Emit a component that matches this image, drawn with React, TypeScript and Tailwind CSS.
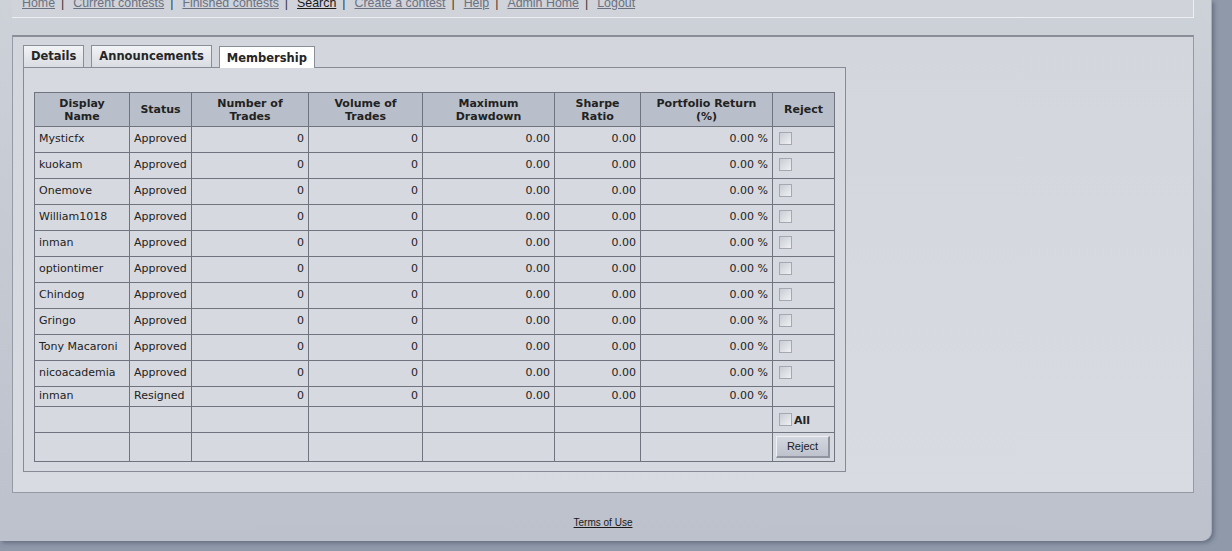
import React from "react";

type Member = { name: string; status: string; canReject: boolean };

const members: Member[] = [
  { name: "Mysticfx", status: "Approved", canReject: true },
  { name: "kuokam", status: "Approved", canReject: true },
  { name: "Onemove", status: "Approved", canReject: true },
  { name: "William1018", status: "Approved", canReject: true },
  { name: "inman", status: "Approved", canReject: true },
  { name: "optiontimer", status: "Approved", canReject: true },
  { name: "Chindog", status: "Approved", canReject: true },
  { name: "Gringo", status: "Approved", canReject: true },
  { name: "Tony Macaroni", status: "Approved", canReject: true },
  { name: "nicoacademia", status: "Approved", canReject: true },
  { name: "inman", status: "Resigned", canReject: false },
];

const navLinks = [
  "Home",
  "Current contests",
  "Finished contests",
  "Search",
  "Create a contest",
  "Help",
  "Admin Home",
  "Logout",
];

function Box() {
  return (
    <span className="inline-block h-[13px] w-[13px] border border-[#a3a8b2] bg-gradient-to-br from-[#c9ccd3] to-[#eef0f3] align-middle" />
  );
}

const cell = "border border-[#6f747f] px-[4px] text-[11px] text-[#222]";

export default function App() {
  return (
    <div className="h-[551px] w-[1232px] overflow-hidden bg-[#8f99aa]">
      <div className="flex h-[541px] w-[1212px] flex-col rounded-br-[10px] border-r border-[#a9afba] bg-gradient-to-b from-[#cdd1d8] to-[#bcc1cc] pl-[12px] pr-[17px] shadow-[2px_2px_4px_rgba(60,70,90,0.5)]">
        {/* top nav */}
        <div
          className="-mt-[12px] h-[30px] border-b border-r border-[#eceef2] bg-[#d0d3da] pl-[10px] pt-[8px] text-[12.4px] leading-[14px] text-[#6b7180]"
          style={{ fontFamily: '"Liberation Sans", Arial, sans-serif' }}
        >
          {navLinks.map((l, i) => (
            <span key={l}>
              <a className={l === "Search" ? "text-[#1a1a1a] underline" : "underline"}>{l}</a>
              {i < navLinks.length - 1 && (
                <span className="ml-[6px] mr-[9px] text-[#333]">|</span>
              )}
            </span>
          ))}
        </div>

        {/* main box */}
        <div
          className="mt-[17px] h-[458px] border border-t-2 border-[#959aa4] border-t-[#8a8e98] bg-gradient-to-b from-[#d3d6dd] to-[#d8dbe1] pl-[10px] pt-[8px]"
          style={{ fontFamily: '"DejaVu Sans", Verdana, sans-serif' }}
        >
          {/* tabs */}
          <div className="flex items-end gap-[7px] text-[11.5px] font-bold leading-none text-[#262626]">
            <div className="relative flex h-[22px] items-center border border-b-0 border-[#8a8e98] bg-gradient-to-b from-[#f2f3f5] to-[#d9dce2] px-[7px]">
              Details
            </div>
            <div className="relative flex h-[22px] items-center border border-b-0 border-[#8a8e98] bg-gradient-to-b from-[#f2f3f5] to-[#d9dce2] px-[7px]">
              Announcements
            </div>
            <div className="relative z-10 -mb-px flex h-[22px] items-center border border-b-0 border-[#8a8e98] bg-white px-[7px] pt-[2px]">
              Membership
            </div>
          </div>

          {/* panel */}
          <div className="h-[405px] w-[823px] border border-[#878b95] bg-[#d6d9e0] pl-[10px] pt-[24px]">
            <table className="w-[800px] table-fixed border-collapse">
              <colgroup>
                <col className="w-[95px]" />
                <col className="w-[62px]" />
                <col className="w-[117px]" />
                <col className="w-[114px]" />
                <col className="w-[132px]" />
                <col className="w-[86px]" />
                <col className="w-[132px]" />
                <col className="w-[62px]" />
              </colgroup>
              <thead>
                <tr className="h-[34px] bg-[#b9bfca]">
                  {[
                    ["Display", "Name"],
                    ["Status"],
                    ["Number of", "Trades"],
                    ["Volume of", "Trades"],
                    ["Maximum", "Drawdown"],
                    ["Sharpe", "Ratio"],
                    ["Portfolio Return", "(%)"],
                    ["Reject"],
                  ].map((h, i) => (
                    <th key={i} className={`${cell} text-center font-bold leading-[13px]`}>
                      {h.map((t, j) => (
                        <div key={j}>{t}</div>
                      ))}
                    </th>
                  ))}
                </tr>
              </thead>
              <tbody>
                {members.map((m, i) => (
                  <tr key={i} className={m.canReject ? "h-[26px]" : "h-[20px]"}>
                    <td className={`${cell} text-left`}>{m.name}</td>
                    <td className={`${cell} text-left`}>{m.status}</td>
                    <td className={`${cell} text-right`}>0</td>
                    <td className={`${cell} text-right`}>0</td>
                    <td className={`${cell} text-right`}>0.00</td>
                    <td className={`${cell} text-right`}>0.00</td>
                    <td className={`${cell} text-right`}>0.00 %</td>
                    <td className={`${cell} pl-[6px] text-left`}>
                      {m.canReject && (
                        <span className="relative -top-[1px]">
                          <Box />
                        </span>
                      )}
                    </td>
                  </tr>
                ))}
                <tr className="h-[26px]">
                  {Array.from({ length: 7 }).map((_, i) => (
                    <td key={i} className={cell} />
                  ))}
                  <td className={`${cell} pl-[6px] pt-[4px]`}>
                    <span className="relative -top-[2px]">
                      <Box />
                    </span>
                    <span className="ml-[2px] align-middle text-[11px] font-bold">All</span>
                  </td>
                </tr>
                <tr className="h-[29px]">
                  {Array.from({ length: 7 }).map((_, i) => (
                    <td key={i} className={cell} />
                  ))}
                  <td className={`${cell} pl-[3px]`}>
                    <button
                      type="button"
                      className="h-[22px] w-[54px] border border-b-2 border-r-2 border-[#8f949e] border-l-[#eef0f3] border-t-[#eef0f3] bg-gradient-to-b from-[#d3d7df] to-[#bdc2cd] text-[11px] text-[#222]"
                      style={{ fontFamily: '"Liberation Sans", Arial, sans-serif' }}
                    >
                      Reject
                    </button>
                  </td>
                </tr>
              </tbody>
            </table>
          </div>
        </div>

        {/* footer */}
        <div className="flex flex-1 items-start justify-center pt-[25px]">
          <a
            className="text-[10px] leading-none text-[#1a1a1a] underline"
            style={{ fontFamily: '"Liberation Sans Narrow", "Liberation Sans", Arial, sans-serif' }}
          >
            Terms of Use
          </a>
        </div>
      </div>
    </div>
  );
}
